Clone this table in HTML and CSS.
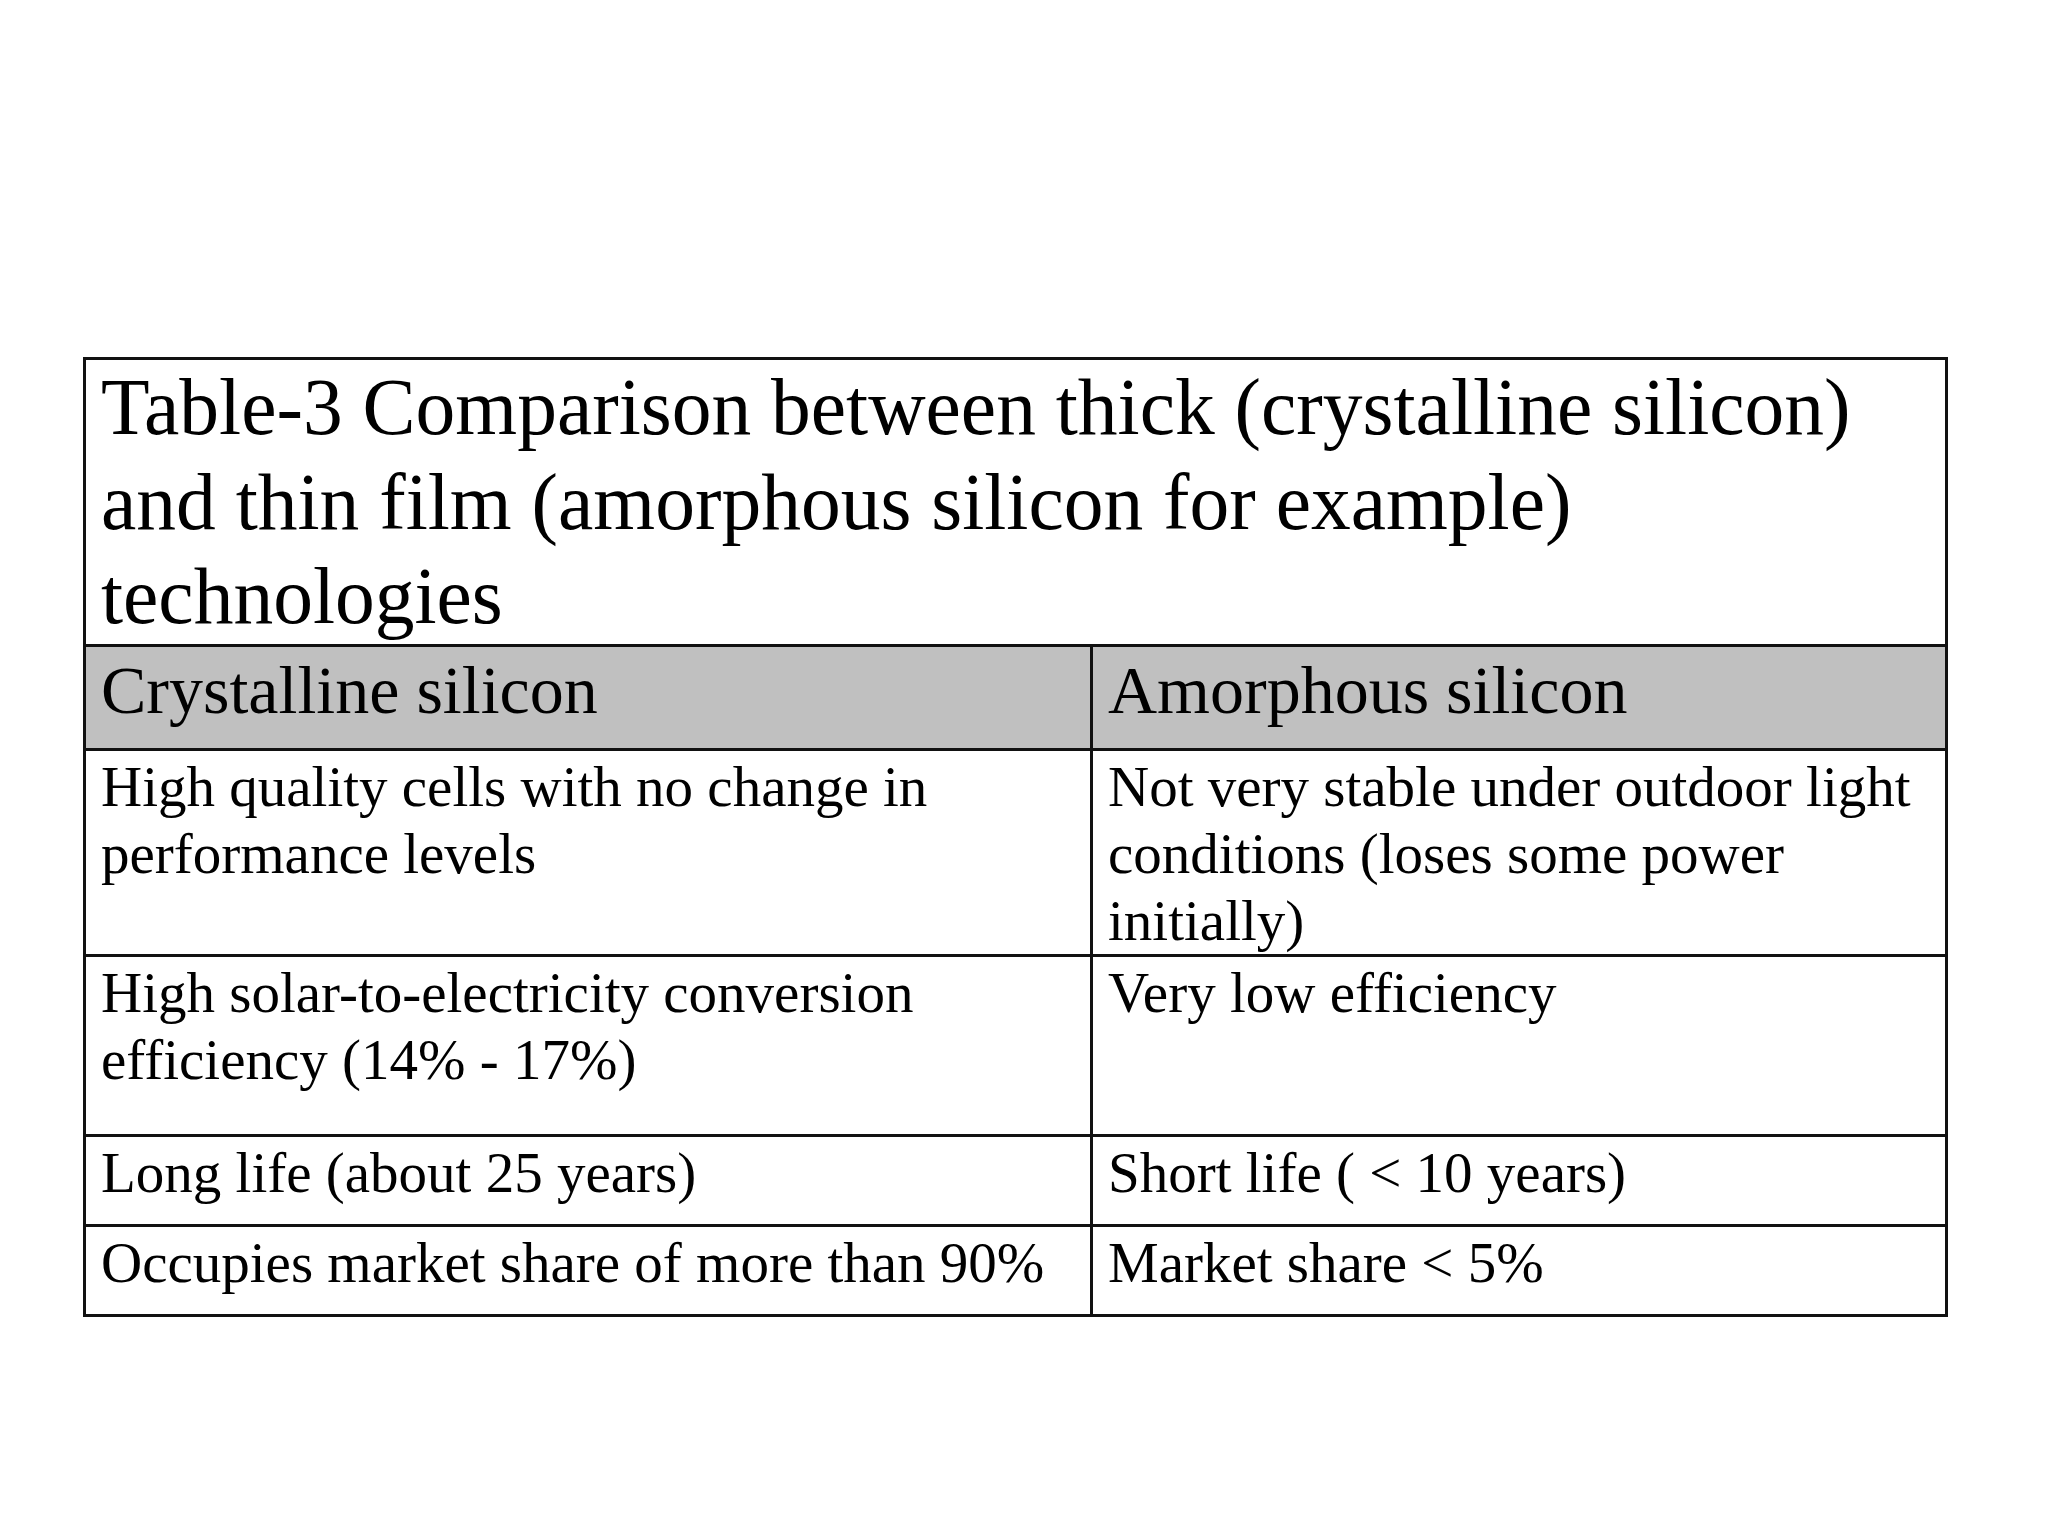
FILE: index.html
```html
<!DOCTYPE html>
<html>
<head>
<meta charset="utf-8">
<link rel="stylesheet" href="styles.css">
</head>
<body>
<main class="slide">
  <table class="cmp">
    <colgroup>
      <col class="c-left">
      <col class="c-right">
    </colgroup>
    <tr class="r-title">
      <td colspan="2" class="title">Table-3 Comparison between thick (crystalline silicon) and thin film (amorphous silicon for example) technologies</td>
    </tr>
    <tr class="r-head">
      <th>Crystalline silicon</th>
      <th>Amorphous silicon</th>
    </tr>
    <tr class="r-auto">
      <td>High quality cells with no change in performance levels</td>
      <td>Not very stable under outdoor light conditions (loses some power initially)</td>
    </tr>
    <tr class="r-tall">
      <td>High solar-to-electricity conversion efficiency (14% - 17%)</td>
      <td>Very low efficiency</td>
    </tr>
    <tr class="r-short">
      <td>Long life (about 25 years)</td>
      <td>Short life ( &lt; 10 years)</td>
    </tr>
    <tr class="r-short">
      <td>Occupies market share of more than 90%</td>
      <td>Market share &lt; 5%</td>
    </tr>
  </table>
</main>
</body>
</html>
```

FILE: styles.css
```css
html, body {
  margin: 0;
  padding: 0;
  background: #ffffff;
}

.slide {
  width: 2048px;
  height: 1536px;
  padding: 357px 0 0 83px;
  box-sizing: border-box;
  font-family: "Liberation Serif", "Times New Roman", serif;
  color: #000;
}

.cmp {
  border-collapse: collapse;
  table-layout: fixed;
  width: 1862px;
}

.c-left { width: 1007px; }
.c-right { width: 855px; }

.cmp td,
.cmp th {
  border: 3px solid #111;
  vertical-align: top;
  text-align: left;
  font-weight: normal;
  padding: 2px 10px 0 15px;
  font-size: 57px;
  line-height: 67px;
  box-sizing: border-box;
}

.cmp td.title {
  font-size: 79.5px;
  line-height: 94.5px;
  padding-top: 0;
  height: 286px;
}

.r-head th {
  background: #c0c0c0;
  font-size: 68px;
  line-height: 80px;
  padding-top: 3px;
  height: 104px;
}

.r-tall td { height: 180px; }
.r-short td { height: 90px; }
```
